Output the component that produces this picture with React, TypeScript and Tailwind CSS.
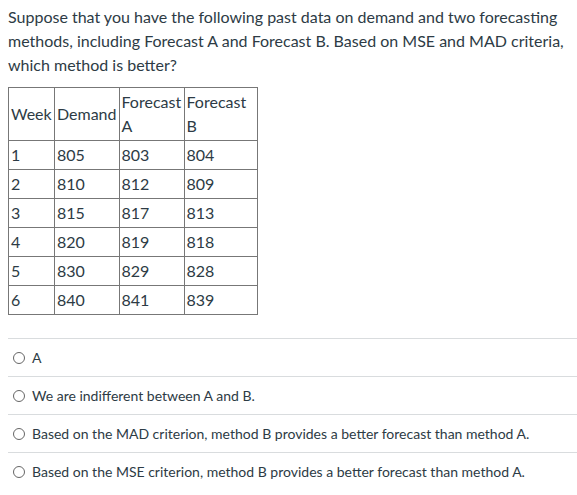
import React from 'react'

const rows = [
  ['1', '805', '803', '804'],
  ['2', '810', '812', '809'],
  ['3', '815', '817', '813'],
  ['4', '820', '819', '818'],
  ['5', '830', '829', '828'],
  ['6', '840', '841', '839'],
]

const options = [
  'A',
  'We are indifferent between A and B.',
  'Based on the MAD criterion, method B provides a better forecast than method A.',
  'Based on the MSE criterion, method B provides a better forecast than method A.',
]

export default function App() {
  return (
    <div className="min-h-screen bg-white pt-[5px] pl-2 text-[#2d3b45] font-['Lato',sans-serif]">
      {/* Question */}
      <p className="text-[16px] leading-6 pr-2">
        Suppose that you have the following past data on demand and two forecasting methods, including Forecast A and
        Forecast B. Based on MSE and MAD criteria, which method is better?
      </p>

      {/* Data table */}
      <table className="mt-[10px] border-collapse text-[16px] leading-6">
        <thead>
          <tr className="h-[53px]">
            <th className="w-[46px] border border-[#777] px-[2px] text-left font-normal">Week</th>
            <th className="w-[64px] border border-[#777] px-[2px] text-left font-normal">Demand</th>
            <th className="w-[65px] border border-[#777] px-[2px] text-left font-normal">Forecast A</th>
            <th className="w-[73px] border border-[#777] px-[2px] text-left font-normal">Forecast B</th>
          </tr>
        </thead>
        <tbody>
          {rows.map((r) => (
            <tr key={r[0]} className="h-[29px]">
              {r.map((c, i) => (
                <td key={i} className="border border-[#777] px-[2px]">
                  {c}
                </td>
              ))}
            </tr>
          ))}
        </tbody>
      </table>

      {/* Answers */}
      <div className="mt-[23px]">
        {options.map((o) => (
          <div key={o} className="flex h-[38px] items-center gap-[7px] border-t border-[#d9dcde] pl-[5px] text-[14px]">
            <span className="h-[12px] w-[12px] shrink-0 rounded-full border border-[#666]" />
            <span>{o}</span>
          </div>
        ))}
      </div>
    </div>
  )
}
